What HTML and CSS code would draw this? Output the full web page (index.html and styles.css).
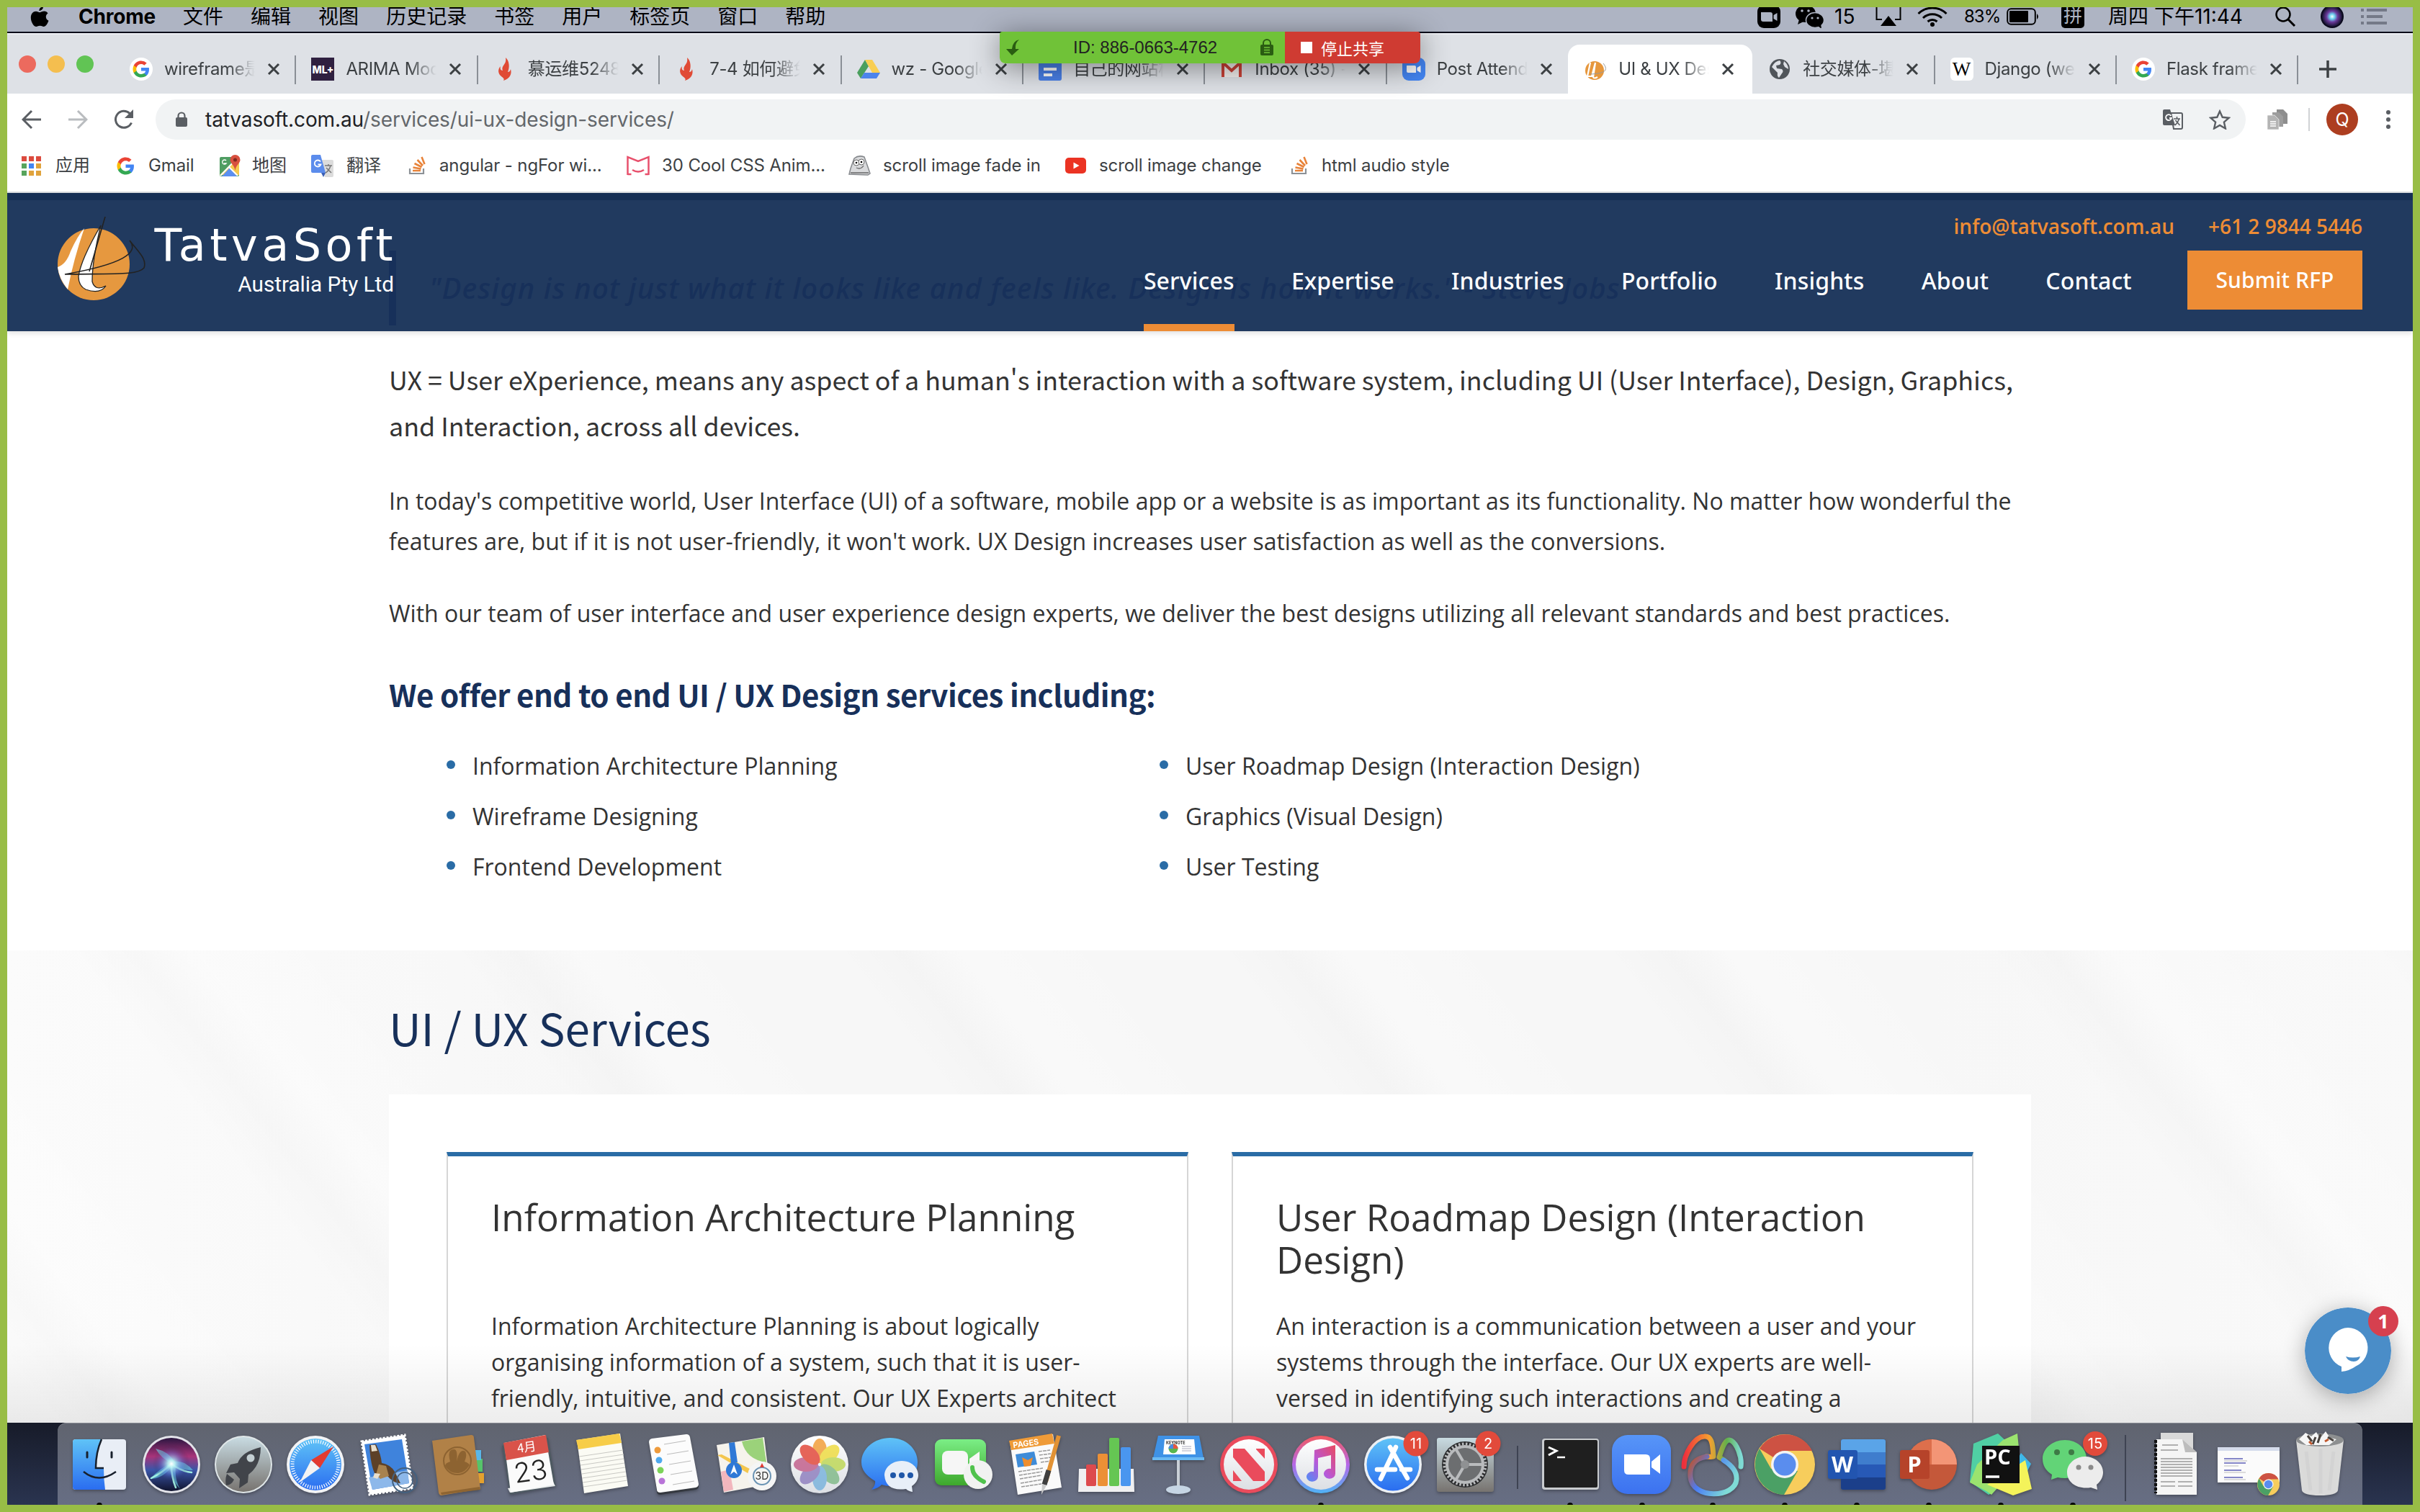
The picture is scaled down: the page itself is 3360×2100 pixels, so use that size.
FILE: index.html
```html
<!DOCTYPE html>
<html lang="zh-CN">
<head>
<meta charset="utf-8">
<title>UI &amp; UX Design Services</title>
<link rel="stylesheet" href="styles.css">
</head>
<body>
<svg class="defs" width="0" height="0">
  <defs>
    <linearGradient id="blue" x2="0" y2="1"><stop stop-color="#5fc3f7"/><stop offset="1" stop-color="#2a6df0"/></linearGradient>
    <linearGradient id="zoomg" x2="0" y2="1"><stop stop-color="#5795f8"/><stop offset="1" stop-color="#3c72f0"/></linearGradient>
    <linearGradient id="green" x2="0" y2="1"><stop stop-color="#7bee86"/><stop offset="1" stop-color="#3ea82c"/></linearGradient>
    <linearGradient id="grey" x2="0" y2="1"><stop stop-color="#c8dbe2"/><stop offset="1" stop-color="#77736f"/></linearGradient>
    <linearGradient id="white" x2="0" y2="1"><stop stop-color="#ffffff"/><stop offset="1" stop-color="#dcdfe4"/></linearGradient>
    <linearGradient id="music" x2="0" y2="1"><stop stop-color="#f25a5f"/><stop offset=".5" stop-color="#b667e8"/><stop offset="1" stop-color="#4fb4f6"/></linearGradient>
    <linearGradient id="note" x1="1" x2="0" y2="1"><stop stop-color="#ea4a5f"/><stop offset=".55" stop-color="#b857d8"/><stop offset="1" stop-color="#4d8ff7"/></linearGradient>
    <linearGradient id="nav" x2="1" y2="0"><stop stop-color="#ee2f3c"/><stop offset=".45" stop-color="#f5a030"/><stop offset=".75" stop-color="#62b04c"/><stop offset="1" stop-color="#7fdbd6"/></linearGradient>
    <linearGradient id="navb" x2="1" y2=".5"><stop stop-color="#c7501e"/><stop offset=".45" stop-color="#4b7df5"/><stop offset="1" stop-color="#7fdbd6"/></linearGradient>
    <radialGradient id="siri"><stop stop-color="#f4ffff"/><stop offset=".25" stop-color="#6fd3ef"/><stop offset=".55" stop-color="#6b3a9c"/><stop offset="1" stop-color="#15132f"/></radialGradient>
    <radialGradient id="orb" cx=".5" cy=".5" r=".5"><stop stop-color="#ffffff"/><stop offset=".2" stop-color="#b9f3f4" stop-opacity=".9"/><stop offset=".6" stop-color="#5a78d8" stop-opacity=".35"/><stop offset="1" stop-color="#1a1434" stop-opacity="0"/></radialGradient>
    <linearGradient id="orbbg" x2="0" y2="1"><stop stop-color="#2a1640"/><stop offset=".35" stop-color="#a8347a"/><stop offset=".6" stop-color="#3a55a8"/><stop offset="1" stop-color="#10142e"/></linearGradient>
    <symbol id="g" viewBox="0 0 48 48"><path fill="#4285f4" d="M46 24.5c0-1.600-.2-3-.4-4.500H24v9h12.400c-.6 3-2.300 5.400-4.700 7v6h7.600c4.300-4 6.700-10 6.700-17.500z"/><path fill="#34a853" d="M24 47c6.200 0 11.400-2 15.200-5.600l-7.500-5.800c-2 1.400-4.600 2.300-7.700 2.300-6 0-11-4-12.800-9.500H3.500v6C7.300 42 15 47 24 47z"/><path fill="#fbbc05" d="M11.200 28.400a14 14 0 0 1 0-8.800v-6H3.500a23 23 0 0 0 0 20.800z"/><path fill="#ea4335" d="M24 10.100c3.400 0 6.400 1.200 8.800 3.500l6.600-6.600A22.500 22.500 0 0 0 24 1C15 1 7.300 6.200 3.500 13.600l7.700 6C13 14.100 18 10.100 24 10.100z"/></symbol>
    <symbol id="x" viewBox="0 0 18 18"><path d="M2 2l14 14M16 2L2 16" stroke="#3c4043" stroke-width="3" fill="none"/></symbol>
    <symbol id="flame" viewBox="0 0 32 32"><path fill="#e04a35" d="M17 0c1 6-1 8-3 11s-2 5-1 7c-3 0-4-3-3-6-4 4-4 10 1 14 2 2 5 3 3 6 9-3 12-9 10-16-1 3-2 4-4 4 3-7 2-16-3-20z"/></symbol>
    <symbol id="so" viewBox="0 0 24 26"><path d="M2 17v7h19v-7" fill="none" stroke="#8c9196" stroke-width="2.200"/><path d="M6 20h11M6.500 15.500l11 2M8.500 10l10 5M12.500 5l7.500 8M18.500 1l4 10" stroke="#e8833a" stroke-width="2.600" fill="none"/></symbol>
    <symbol id="chrome" viewBox="0 0 84 84"><circle cx="42" cy="42" r="42" fill="#f7cd5c"/><path fill="#cd5243" d="M42 42L7 20a42 42 0 0 1 73 3H42z"/><path fill="#4ba065" d="M7 20a42 42 0 0 0 34 64l19-33-37-3z"/><circle cx="42" cy="42" r="19" fill="#f4f4f4"/><circle cx="42" cy="42" r="15.500" fill="#5a8dee"/></symbol>
  </defs>
</svg>

<div class="desktop">
  <div class="menubar">
    <div class="menus">
      <svg class="apple" viewBox="0 0 26 28"><path d="M18 0c.3 3-2.500 6-5.500 6C12 3 15 .4 18 0zM24.500 9.500c-4 2.500-3.500 8.500 1 10.300C24 24 21.500 28 18.700 28c-2 0-2.700-1.200-5.200-1.200S10.200 28 8.300 28C4.800 28 .8 21.500.8 15.500c0-5.500 3.500-8.700 7-8.700 2.300 0 4 1.400 5.500 1.400 1.400 0 3.500-1.600 6.200-1.600 2 0 4 1 5 2.900z"/></svg>
      <b>Chrome</b><span>文件</span><span>编辑</span><span>视图</span><span>历史记录</span><span>书签</span><span>用户</span><span>标签页</span><span>窗口</span><span>帮助</span>
    </div>
    <div class="status">
      <svg class="s-zoom" viewBox="0 0 32 32"><rect width="32" height="32" rx="9"/><path fill="#aeb4c3" d="M5 10h13q3 0 3 3v10H8q-3 0-3-3zM22.500 14l5-3v11l-5-3z"/></svg>
      <svg class="s-wechat" viewBox="0 0 40 32"><ellipse cx="15" cy="12" rx="14" ry="12"/><path d="M6 20l-2 7 8-4z"/><ellipse cx="28" cy="21" rx="12.500" ry="10.500" stroke="#aeb4c3" stroke-width="1.500"/><path d="M32 29l5 4-1-7z"/><g fill="#aeb4c3"><circle cx="10" cy="8" r="1.800"/><circle cx="19" cy="8" r="1.800"/><circle cx="24" cy="18" r="1.600"/><circle cx="32" cy="18" r="1.600"/></g></svg>
      <span class="s-15">15</span>
      <svg class="s-air" viewBox="0 0 36 28"><path d="M9 18H1.500V0M27 18h7.500V0" fill="none" stroke="#000" stroke-width="2"/><path d="M18 13l11 14H7z"/></svg>
      <svg class="s-wifi" viewBox="0 0 42 28"><g fill="none" stroke="#000" stroke-width="3"><path d="M1.500 10a28 28 0 0 1 39 0M8 16a19 19 0 0 1 26 0M14.500 21a10 10 0 0 1 13 0"/></g><circle cx="21" cy="25" r="3"/></svg>
      <span class="s-pct">83%</span>
      <svg class="s-bat" viewBox="0 0 46 24"><rect x="1.200" y="1.200" width="38.600" height="21.600" rx="5" fill="none" stroke="#000" stroke-width="2"/><rect x="4" y="4" width="26" height="16" rx="1"/><path d="M42 8q4 4 0 8z"/></svg>
      <span class="s-pin">拼</span>
      <span class="s-date">周四 下午11:44</span>
      <svg class="s-search" viewBox="0 0 30 28"><circle cx="12" cy="11" r="9.500" fill="none" stroke="#000" stroke-width="2.500"/><path d="M19 18l9 9" stroke="#000" stroke-width="3"/></svg>
      <svg class="s-siri" viewBox="0 0 32 32"><circle cx="16" cy="16" r="16" fill="#0b0a1e"/><circle cx="16" cy="16" r="14" fill="url(#siri)"/></svg>
      <svg class="s-list" viewBox="0 0 36 22"><path d="M0 2h4M8 2h28M0 11h4M8 11h22M0 20h4M8 20h28" stroke="#747987" stroke-width="4"/></svg>
    </div>
  </div>

  <div class="tabstrip">
    <div class="lights"><i class="red"></i><i class="yellow"></i><i class="greenl"></i></div>
    <div class="tab"><i class="fav round"><svg viewBox="0 0 48 48"><use href="#g"/></svg></i><span>wireframe是什么</span><svg class="x"><use href="#x"/></svg></div>
    <div class="tab"><i class="fav ml">ML+</i><span>ARIMA Model</span><svg class="x"><use href="#x"/></svg></div>
    <div class="tab"><i class="fav"><svg><use href="#flame"/></svg></i><span>慕运维5248开</span><svg class="x"><use href="#x"/></svg></div>
    <div class="tab"><i class="fav"><svg><use href="#flame"/></svg></i><span>7-4 如何避免</span><svg class="x"><use href="#x"/></svg></div>
    <div class="tab"><i class="fav"><svg viewBox="0 0 32 32"><path fill="#4a9f5e" d="M11 3L0 21l5 8 11-17z"/><path fill="#f8ce53" d="M11 3h10l11 18H21z"/><path fill="#4c84ec" d="M10 21h22l-5 8H5z"/></svg></i><span>wz - Google</span><svg class="x"><use href="#x"/></svg></div>
    <div class="tab"><i class="fav docs"></i><span>自己的网站模</span><svg class="x"><use href="#x"/></svg></div>
    <div class="tab"><i class="fav"><svg viewBox="0 0 32 32"><path fill="#f4f0ee" d="M2 5h28v22H2z"/><path d="M4 27V7l12 11L28 7v20" fill="none" stroke="#cc4237" stroke-width="4"/></svg></i><span>Inbox (35) -</span><svg class="x"><use href="#x"/></svg></div>
    <div class="tab nosep"><i class="fav"><svg viewBox="0 0 32 32"><rect width="32" height="32" rx="9" fill="#4486f4"/><path fill="#fff" d="M6 11h11q2 0 2 2v8H8q-2 0-2-2zM20.500 14l5-3v10l-5-3z"/></svg></i><span>Post Attendee</span><svg class="x"><use href="#x"/></svg></div>
    <div class="tab active"><i class="fav"><svg viewBox="0 0 32 32"><circle cx="15" cy="18" r="13" fill="#e6973c"/><path d="M9 7L5 26l6 0 5-19-3 20q1 3 6 0" fill="none" stroke="#fff" stroke-width="2.200"/><path d="M27 8c8 10 2 14-18 15" fill="none" stroke="#999"/></svg></i><span>UI &amp; UX Design</span><svg class="x"><use href="#x"/></svg></div>
    <div class="tab"><i class="fav"><svg viewBox="0 0 32 32"><circle cx="16" cy="16" r="14" fill="#50555a"/><path fill="#dee1e6" d="M5 13q4-8 11-9 3 3 0 6l-5 1 1 4 7 1q3 3 0 6l-4 6q-3-2-2-7l-4-4zM22 5q6 5 6 11l-5-3-2-4z"/></svg></i><span>社交媒体-堪培</span><svg class="x"><use href="#x"/></svg></div>
    <div class="tab"><i class="fav wiki">W</i><span>Django (web</span><svg class="x"><use href="#x"/></svg></div>
    <div class="tab"><i class="fav round"><svg viewBox="0 0 48 48"><use href="#g"/></svg></i><span>Flask framework</span><svg class="x"><use href="#x"/></svg></div>
    <svg class="plus" viewBox="0 0 26 26"><path d="M13 1v24M1 13h24" stroke="#3c4043" stroke-width="3.500"/></svg>
  </div>

  <div class="toolbar">
    <svg class="back" viewBox="0 0 28 28"><path d="M27 14H3M14 2L2 14l12 12" fill="none" stroke="#5a5e63" stroke-width="3"/></svg>
    <svg class="fwd" viewBox="0 0 28 28"><path d="M1 14h24M14 2l12 12-12 12" fill="none" stroke="#b9bcbf" stroke-width="3"/></svg>
    <svg class="reload" viewBox="0 0 28 28"><path d="M24.500 18.500A11.500 11.500 0 1 1 22 5.500l2 2.500" fill="none" stroke="#5a5e63" stroke-width="3"/><path fill="#5a5e63" d="M27 0v12H15z"/></svg>
    <div class="omnibox">
      <svg class="lock" viewBox="0 0 16 22"><rect y="8" width="16" height="13" rx="2" fill="#5a5e63"/><path d="M3.500 9V6a4.500 4.500 0 0 1 9 0v3" fill="none" stroke="#5a5e63" stroke-width="2.200"/></svg>
      <span class="url">tatvasoft.com.au<em>/services/ui-ux-design-services/</em></span>
      <svg class="trans" viewBox="0 0 28 28"><path d="M11 5h14q2 0 2 2v18q0 2-2 2H15z" fill="none" stroke="#5a5e63" stroke-width="2"/><path fill="#5a5e63" d="M2 0h8l7 22H2q-2 0-2-2V2q0-2 2-2z"/><path d="M11.500 9a4 4 0 1 0 .5 3H9" fill="none" stroke="#fff" stroke-width="1.800"/><path d="M15 13h9M19.500 10v3M22.500 13q-2 6-6 9M17.500 15l6 7" fill="none" stroke="#5a5e63" stroke-width="1.600"/></svg>
      <svg class="star" viewBox="0 0 30 28"><path d="M15 2.500l3.700 8.300 9 .9-6.800 6 2 8.800-7.900-4.600-7.900 4.600 2-8.800-6.800-6 9-.9z" fill="none" stroke="#5a5e63" stroke-width="2.400"/></svg>
    </div>
    <svg class="ext" viewBox="0 0 28 28"><path fill="#8e8e8e" d="M13 0h9l6 6v14H13z"/><path fill="#9d9d9d" d="M7 4h9l6 6v14H7z"/><path fill="#b4b4b4" stroke="#fff" stroke-width=".6" d="M0 8h10l6 6v14H0z"/><path d="M4 17h8M4 20h8M4 23h8" stroke="#fff" stroke-width="1.500"/></svg>
    <i class="tsep"></i>
    <span class="avatar">Q</span>
    <svg class="dots" viewBox="0 0 6 26"><circle cx="3" cy="3" r="3"/><circle cx="3" cy="13" r="3"/><circle cx="3" cy="23" r="3"/></svg>
  </div>

  <div class="bookmarks">
    <div><svg class="bi apps" viewBox="0 0 27 27"><path fill="#dc4b3e" d="M0 0h7v7H0zM10 0h7v7h-7zM20 0h7v7h-7z"/><path fill="#57a45c" d="M0 10h7v7H0zM0 20h7v7H0z"/><path fill="#4285f4" d="M10 10h7v7h-7z"/><path fill="#e0a33c" d="M20 10h7v7h-7zM10 20h7v7h-7zM20 20h7v7h-7z"/></svg><span>应用</span></div>
    <div><svg class="bi gg" viewBox="0 0 48 48"><use href="#g"/></svg><span>Gmail</span></div>
    <div><svg class="bi mp" viewBox="0 0 30 30"><rect y="3" width="27" height="27" rx="2" fill="#4f9d62"/><path fill="#f5c94f" d="M0 28L24 5l3 3v20z"/><path fill="#5b8ff0" d="M3 30l11-12 10 12z"/><path stroke="#fff" stroke-width="2" d="M1 29L25 4M13 17l12 12"/><path fill="#d8503f" d="M21.500 0a7 7 0 0 1 7 7c0 5-6 7-7 15-1-8-7-10-7-15a7 7 0 0 1 7-7z"/><circle cx="21.500" cy="7" r="2.500" fill="#7d2a20"/><path d="M9 8a3 3 0 1 0 0 4H6" stroke="#fff" fill="none" stroke-width="1.300"/></svg><span>地图</span></div>
    <div><svg class="bi tr" viewBox="0 0 31 31"><path fill="#dcdcdc" d="M12 7h17q2 0 2 2v20q0 2-2 2H19z"/><path fill="#5b8cec" d="M2 0h11l7 25H2q-2 0-2-2V2q0-2 2-2z"/><path fill="#3a5fb5" d="M14 25h6l-3 6z"/><path d="M13 9.500a4.500 4.500 0 1 0 .5 4H9.500" stroke="#fff" fill="none" stroke-width="1.800"/><path d="M19 15h10M24 13v2M27 15q-2 7-7 10M21 18l7 7" stroke="#777" fill="none" stroke-width="1.500"/></svg><span>翻译</span></div>
    <div><svg class="bi sov"><use href="#so"/></svg><span>angular - ngFor wi...</span></div>
    <div><svg class="bi mm" viewBox="0 0 32 28"><path d="M1.500 27V2l14.500 6L30.500 2v25M1.500 26h5M25.500 26h5M8 20q8 5 16 0" fill="none" stroke="#e8506c" stroke-width="2.500"/></svg><span>30 Cool CSS Anim...</span></div>
    <div><svg class="bi cd" viewBox="0 0 33 28"><path d="M2 26l2-8 5-14q6-5 14-2l5 14 3 9-3 2z" fill="#d9dadc" stroke="#85888c" stroke-width="1.500"/><circle cx="12" cy="10" r="4" fill="#fff" stroke="#666"/><circle cx="19" cy="9" r="4" fill="#fff" stroke="#666"/><circle cx="12" cy="10" r="1.300"/><circle cx="19" cy="9" r="1.300"/><path d="M12 17q6 3 10-3M4 24h25" fill="none" stroke="#666" stroke-width="1.300"/></svg><span>scroll image fade in</span></div>
    <div><svg class="bi yt" viewBox="0 0 29 22"><rect width="29" height="22" rx="5" fill="#eb3323"/><path fill="#fff" d="M11.500 6.500l8 4.500-8 4.500z"/></svg><span>scroll image change</span></div>
    <div><svg class="bi sov"><use href="#so"/></svg><span>html audio style</span></div>
  </div>

  <div class="page">
    <header class="site">
      <p class="quote">"Design is not just what it looks like and feels like. Design is how it works." - Steve Jobs</p>
      <div class="brand">
        <svg viewBox="0 0 124 118"><circle cx="50" cy="66" r="50" fill="#e6983f"/><path fill="#fff" d="M37 16Q22 60 14 101 2 86 0 70 12 66 18 48 28 26 37 16z"/><path fill="#fff" d="M60 12Q48 60 48 90q4 14 19 6-8 12-28 5-10-5-10-18Q32 60 60 12z" stroke="#222" stroke-width="1.300"/><path fill="none" stroke="#222" stroke-width="1.600" d="M66 0L44 76M100 33c14 18 24 26 20 38-8 10-36 8-110 9 80-14 104-30 90-47z"/></svg>
        <div class="brandtext"><span class="tatva">TatvaSoft</span><span class="apl">Australia Pty Ltd</span></div>
      </div>
      <div class="right">
        <div class="contact"><span>info@tatvasoft.com.au</span><span>+61 2 9844 5446</span></div>
        <nav><a class="on">Services</a><a>Expertise</a><a>Industries</a><a>Portfolio</a><a>Insights</a><a>About</a><a>Contact</a><a class="rfp">Submit RFP</a></nav>
      </div>
    </header>

    <main>
      <p class="lead">UX = User eXperience, means any aspect of a human's interaction with a software system, including UI (User Interface), Design, Graphics,<br>and Interaction, across all devices.</p>
      <p>In today's competitive world, User Interface (UI) of a software, mobile app or a website is as important as its functionality. No matter how wonderful the<br>features are, but if it is not user-friendly, it won't work. UX Design increases user satisfaction as well as the conversions.</p>
      <p>With our team of user interface and user experience design experts, we deliver the best designs utilizing all relevant standards and best practices.</p>
      <h3>We offer end to end UI / UX Design services including:</h3>
      <ul><li>Information Architecture Planning</li><li>User Roadmap Design (Interaction Design)</li><li>Wireframe Designing</li><li>Graphics (Visual Design)</li><li>Frontend Development</li><li>User Testing</li></ul>
    </main>

    <section class="services">
      <h2>UI / UX Services</h2>
      <div class="panel">
        <article><h4>Information Architecture Planning</h4><p>Information Architecture Planning is about logically<br>organising information of a system, such that it is user-<br>friendly, intuitive, and consistent. Our UX Experts architect</p></article>
        <article><h4>User Roadmap Design (Interaction<br>Design)</h4><p>An interaction is a communication between a user and your<br>systems through the interface. Our UX experts are well-<br>versed in identifying such interactions and creating a</p></article>
      </div>
    </section>
    <div class="fade"></div>
    <div class="chat">
      <svg viewBox="0 0 120 120"><circle cx="60" cy="60" r="60" fill="#4a8dc8"/><path fill="#fff" d="M60 28a28 28 0 0 1 11 53.500Q62 88 51 89V82A28 28 0 0 1 60 28z"/><path fill="#4a8dc8" d="M57 68q10 3 20 0-2 7-9 7-8 0-11-7z"/></svg>
      <b>1</b>
    </div>
  </div>

  <div class="dockbar"><div class="dock">
    <svg viewBox="0 0 100 114"><rect x="13" y="23" width="74" height="70" rx="4" fill="#e9eef6"/><path fill="url(#blue)" d="M17 23h36q-8 18-8 40h11q0 16 2 30H17q-4 0-4-4V27q0-4 4-4z"/><path d="M33 41v7M67 41v7" stroke="#18202c" stroke-width="3" stroke-linecap="round"/><path d="M28 68q21 17 45 0M53 23q-8 18-8 40h11" fill="none" stroke="#18202c" stroke-width="2.500"/></svg>
    <svg viewBox="0 0 100 114"><circle cx="50" cy="58" r="40" fill="#e3e4ea"/><circle cx="50" cy="58" r="37" fill="url(#orbbg)"/><path fill="#6fe0f0" opacity=".55" d="M20 78Q36 62 50 56q-14-6-22-20 18 4 26 18 14-2 26 12-14 0-24-4-2 16 6 30-12-12-14-28-12 14-28 14z"/><path d="M22 77q16-8 28-20 12 10 28 12M50 58q0 18 6 32" fill="none" stroke="#a8fbe8" stroke-width="2.500" stroke-linecap="round" opacity=".9"/><circle cx="50" cy="57" r="26" fill="url(#orb)"/></svg>
    <svg viewBox="0 0 100 114"><circle cx="50" cy="58" r="40" fill="#dfe6e8"/><circle cx="50" cy="58" r="38" fill="url(#grey)"/><path fill="#41444a" d="M74 34Q48 40 42 56l-10 2-6 12 11-1 8 9-1 13 12-8 1-11Q74 60 74 34zM27 71l10 8q-4 8-11 8-2-8 1-16z"/><circle cx="60" cy="49" r="5.500" fill="#c4cfd2"/></svg>
    <svg viewBox="0 0 100 114"><circle cx="50" cy="58" r="40" fill="#f2f3f5"/><circle cx="50" cy="58" r="36" fill="url(#blue)"/><circle cx="50" cy="58" r="32" fill="none" stroke="#fff" stroke-width="5" stroke-dasharray="1.200 2.150"/><path fill="#e33a30" d="M75 33L44 52l12 11z"/><path fill="#f3f3f3" d="M28 83l16-31 12 11z"/></svg>
    <svg viewBox="0 0 100 114"><path fill="#fff" stroke="#fff" stroke-width="3" stroke-dasharray="3 2" d="M14 26l60-9 11 74-60 9z"/><path fill="#3f83dc" d="M18 30l52-7 10 61-51 9z"/><path fill="#8db8ea" d="M24 76l54-10 2 18-51 9z"/><path fill="#5d4128" d="M25 31l9-1q7 14 8 26 12 2 18 12l8 16q-10 0-18-10l-10 2-8-6q-6-14-7-39z"/><path fill="#a8824e" d="M38 58l10 2 4 14-12 4-6-6z"/><path fill="#e8dfce" d="M27 31l6 0 3 8-8 1zM32 70l8 1-4 7-6-2z"/><circle cx="74" cy="80" r="17" fill="none" stroke="#44617f" stroke-width="2"/><circle cx="74" cy="80" r="11" fill="none" stroke="#44617f" stroke-width="1.500"/></svg>
    <svg viewBox="0 0 100 114"><path fill="#e4a12e" d="M70 70h14v14H70z"/><path fill="#56c46a" d="M70 50h12v18H70z"/><path fill="#59b7e8" d="M68 38h12v14H68z"/><path fill="#b18147" d="M12 25l54-8q4 0 4 4l9 71-54 9q-3 0-4-4z"/><path fill="#8e6431" d="M24 97l54-8 1 4-54 7z"/><circle cx="47" cy="53" r="19" fill="none" stroke="#8d6331" stroke-width="2"/><path fill="#8d6331" d="M30 60q0-4 7-6-5-18 6-17 5 1 3 17 4-19 12-14 3 5-1 14 6 2 7 5-8 12-17 11-11 0-17-10z"/></svg>
    <svg viewBox="0 0 100 114"><path fill="#4e5a62" d="M9 32l64-11 11 67-64 12z"/><path fill="#e8ebec" d="M17 91l63-9 3 6-63 9z"/><path fill="#fbfbfb" d="M12 28l57-11 12 69-60 11z"/><path fill="#d9534a" d="M11 28l59-11 4 24-59 11z"/><text x="44" y="40" class="t1" transform="rotate(-8 44 40)">4月</text><text x="49" y="81" class="t2" transform="rotate(-8 49 70)">23</text></svg>
    <svg viewBox="0 0 100 114"><path fill="#fbfbf4" d="M13 24l60-9 11 73-61 10z"/><path fill="#f7cd48" d="M12 24l60-9 3 13-60 9z"/><path d="M16 47l61-9M17 53l61-9M18 59l60-9M19 65l60-9M20 71l60-9M20 77l61-9M21 83l61-9M22 89l61-9" stroke="#c9c9c4"/></svg>
    <svg viewBox="0 0 100 114"><path fill="#34383f" d="M14 28q0-4 4-5l47-6q4 0 5 4l12 67q0 4-4 5l-49 7q-5 0-5-4z"/><path fill="#fcfcfc" d="M13 27q0-4 4-5l48-6q4 0 5 4l12 65q0 4-4 5l-49 7q-5 0-5-4z"/><circle cx="25" cy="38" r="4.500" fill="#ee9b3c"/><circle cx="27" cy="52" r="4.500" fill="#4ea9ee"/><circle cx="29" cy="66" r="4.500" fill="#7bd357"/><circle cx="31" cy="81" r="4.500" fill="#b873d8"/><path d="M34 30l30-5M38 44l30-5M41 58l30-5M43 72l30-5M46 86l30-5" stroke="#bbb"/></svg>
    <svg viewBox="0 0 100 114"><path fill="#f6f3ec" d="M7 31l66-11 8 65-64 12z"/><path fill="#9bd27a" d="M42 26l29-5 5 34q-28-4-34-29z"/><path fill="#f4c64d" d="M8 45l6-1 62 32 1 10z"/><path fill="#f2b6bd" d="M13 68l12-3 5 28-13 3z"/><path fill="#2f78d6" d="M24 28l8-1 4 28-9 2z"/><circle cx="31" cy="66" r="11" fill="#2f78d6"/><path fill="#fff" d="M31 58l5 14-5-4-5 4z"/><circle cx="70" cy="74" r="20" fill="#f5f5f5"/><circle cx="70" cy="74" r="12" fill="none" stroke="#6a93b4" stroke-width="2"/><path fill="#e03a30" d="M70 56l3 6h-6z"/><text x="70" y="79" class="t3">3D</text></svg>
    <svg viewBox="0 0 100 114"><circle cx="50" cy="58" r="40" fill="url(#white)"/><g opacity=".85"><ellipse cx="50" cy="39" rx="10" ry="17" fill="#f2a03c"/><ellipse cx="50" cy="39" rx="10" ry="17" fill="#efdc44" transform="rotate(45 50 58)"/><ellipse cx="50" cy="39" rx="10" ry="17" fill="#bfd859" transform="rotate(90 50 58)"/><ellipse cx="50" cy="39" rx="10" ry="17" fill="#83bb8b" transform="rotate(135 50 58)"/><ellipse cx="50" cy="39" rx="10" ry="17" fill="#7cb4dd" transform="rotate(180 50 58)"/><ellipse cx="50" cy="39" rx="10" ry="17" fill="#9182c0" transform="rotate(225 50 58)"/><ellipse cx="50" cy="39" rx="10" ry="17" fill="#c3628e" transform="rotate(270 50 58)"/><ellipse cx="50" cy="39" rx="10" ry="17" fill="#e34c3e" transform="rotate(315 50 58)"/></g></svg>
    <svg viewBox="0 0 100 114"><path fill="url(#blue)" d="M48 21c22 0 38 15 38 34S70 88 48 88q-6 0-12-2-4 5-14 7 6-6 5-12Q8 70 8 55c0-19 18-34 40-34z"/><path fill="#e8eff8" d="M64 53c13 0 23 9 23 20 0 6-4 12-9 15l1 8q-6-1-9-4-28 4-30-19c0-11 11-20 24-20z"/><g fill="#1f57a8"><circle cx="52" cy="73" r="4"/><circle cx="64" cy="73" r="4"/><circle cx="76" cy="73" r="4"/></g></svg>
    <svg viewBox="0 0 100 114"><rect x="10" y="23" width="71" height="64" rx="9" fill="url(#green)"/><rect x="20" y="39" width="36" height="33" rx="8" fill="#f6f6f6"/><path fill="#f6f6f6" d="M58 50l14-10v18l-14 8z"/><circle cx="70" cy="72" r="20" fill="#f1f2f1"/><path d="M62 62q0 12 16 20" stroke="#4fc24c" stroke-width="6" fill="none" stroke-linecap="round"/></svg>
    <svg viewBox="0 0 100 114"><path fill="#fafafa" d="M14 26l60-10 12 74-61 10z"/><path fill="#ef9b38" d="M13 25l60-10 3 14-60 9z"/><text x="19" y="35" class="t4" transform="rotate(-8 19 35)">PAGES</text><path fill="#3f8cd8" d="M22 44l26-4 4 18-27 4z"/><path fill="#ef8e2e" d="M31 48l8 4 7-4-3 12-9 1z"/><path d="M54 40l16-2M55 45l16-2M56 50l16-2M57 55l14-2M26 68l34-5M27 73l32-5M28 78l30-5M29 84l30-5M30 89l28-4" stroke="#999" stroke-width="1.500" stroke-dasharray="5 1"/><path d="M82 18L64 82" stroke="#e29234" stroke-width="6"/><path d="M68 66l-6 20" stroke="#3f3f3f" stroke-width="7"/><path fill="#ccc" d="M59 85l6 2-7 13z"/></svg>
    <svg viewBox="0 0 100 114"><path fill="#f0f0f2" d="M10 64h76l1 32H9z"/><rect x="20" y="58" width="14" height="30" rx="2" fill="#dd4a4e"/><rect x="36" y="43" width="14" height="45" rx="2" fill="#ec9036"/><rect x="52" y="21" width="14" height="67" rx="2" fill="#65c653"/><rect x="68" y="34" width="14" height="54" rx="2" fill="#4a96ef"/></svg>
    <svg viewBox="0 0 100 114"><path d="M48 50v45" stroke="#c9cfd6" stroke-width="4"/><ellipse cx="48" cy="93" rx="17" ry="6" fill="#c6d5e4"/><path fill="#3f92e6" d="M20 18h57l6 31H13z"/><path fill="#6bbaf2" d="M12 48h72v4H12z"/><path fill="#fff" d="M29 23h41l2 21H27z"/><text x="31" y="30" class="t5">KEYNOTE</text><circle cx="41" cy="36" r="6.500" fill="#59b64e"/><path fill="#e6573f" d="M41 36v-6.500a6.500 6.500 0 0 1 6.500 6.500z"/><path fill="#4a8ae0" d="M41 36h-6.500a6.500 6.500 0 0 1 6.500-6.500z"/><path d="M53 33h13M53 36h13M53 39h13" stroke="#aab"/></svg>
    <svg viewBox="0 0 100 114"><circle cx="46" cy="58" r="40" fill="#ea4b5c"/><circle cx="46" cy="58" r="35" fill="url(#white)"/><path fill="#ea4b5c" d="M24 36h16l28 32v13H52L24 48zM56 36h12v14L56 37zM24 66l12 15H24z"/></svg>
    <svg viewBox="0 0 100 114"><circle cx="46" cy="58" r="40" fill="url(#music)"/><circle cx="46" cy="58" r="35" fill="url(#white)"/><path fill="url(#note)" d="M37 38l29-7v40a8 7 0 1 1-6-7V45l-18 4v26a8 7 0 1 1-6-7z"/></svg>
    <svg viewBox="0 0 100 114"><circle cx="46" cy="58" r="40" fill="#ecf0f4"/><circle cx="46" cy="58" r="36.500" fill="url(#blue)"/><path d="M50 34L29 78M42 34l24 43M24 65h25M58 65h12" stroke="#fff" stroke-width="6.500" stroke-linecap="round"/><circle cx="78" cy="29" r="17.500" fill="#e24a3b"/><text x="78" y="36" class="badge">11</text></svg>
    <svg viewBox="0 0 100 114"><rect x="7" y="21" width="79" height="75" rx="3" fill="url(#grey)"/><circle cx="46" cy="58" r="32" fill="#2c2d2f"/><circle cx="46" cy="58" r="25" fill="#6c6e70"/><circle cx="46" cy="58" r="25" fill="none" stroke="#b9bbbd" stroke-width="4"/><circle cx="46" cy="58" r="28.500" fill="none" stroke="#b9bbbd" stroke-width="4" stroke-dasharray="2.500 2.500"/><path d="M46 58h25M46 58L33 36M46 58L33 80" stroke="#b9bbbd" stroke-width="4"/><circle cx="46" cy="58" r="6" fill="#8f9193"/><circle cx="78" cy="29" r="17.500" fill="#e24a3b"/><text x="78" y="36" class="badge">2</text></svg>
    <i class="dsep"></i>
    <svg viewBox="0 0 100 114"><rect x="11" y="22" width="79" height="71" rx="4" fill="#c9cccf"/><rect x="14" y="24" width="74" height="66" rx="2" fill="#1f1f1f"/><path d="M20 34l11 5-11 6" fill="none" stroke="#fff" stroke-width="3"/><path d="M32 48h11" stroke="#fff" stroke-width="2.500"/></svg>
    <svg viewBox="0 0 100 114"><rect x="8" y="17" width="82" height="82" rx="22" fill="url(#zoomg)"/><path fill="#fff" d="M25 44h30q6 0 6 6v22H31q-6 0-6-6zM63 54l12-10v27l-12-9z"/></svg>
    <svg viewBox="0 0 100 114"><g fill="none" stroke-width="7" stroke-linecap="round" stroke-linejoin="round"><path stroke="url(#nav)" d="M8 61C8 44 22 20 36 19c10-1 12 8 13 28q-1 1-10 0M87 61c2-14-6-32-13-36-8-5-13 10-17 23l7 4"/><path stroke="url(#navb)" d="M40 47C20 50 16 62 17 75c2 32 62 30 64 4 1-12-7-20-18-27"/></g></svg>
    <svg viewBox="0 0 100 114"><use href="#chrome" x="6" y="16" width="84" height="84"/></svg>
    <svg viewBox="0 0 100 114"><rect x="26" y="23" width="62" height="70" rx="3" fill="#1b3f8a"/><path fill="#2759b6" d="M26 58h62v18H26z"/><path fill="#3f7dcd" d="M26 41h62v17H26z"/><path fill="#5aa4e8" d="M29 23h56q3 0 3 3v15H26V26q0-3 3-3z"/><rect x="8" y="38" width="41" height="40" rx="3" fill="#2255b0"/><text x="28" y="69" class="office">W</text></svg>
    <svg viewBox="0 0 100 114"><circle cx="52" cy="58" r="35" fill="#c4583a"/><path fill="#f39576" d="M52 58V23a35 35 0 0 1 35 35z"/><path fill="#dd6f4c" d="M52 58V23a35 35 0 0 0-35 35z"/><rect x="8" y="38" width="41" height="40" rx="3" fill="#b6432a"/><text x="28" y="69" class="office">P</text></svg>
    <svg viewBox="0 0 100 114"><path fill="#50cfa4" d="M10 29l34-14 13 12-20 70-6 3L5 82z"/><path fill="#9be36f" d="M71 15l4 40-40 45-7-5L5 83l10-25 36-34z"/><path fill="#3fb8e8" d="M76 42l14 15-10 20-12-20z"/><path fill="#f4f35a" d="M82 52l9 40-26 9-36-15z"/><rect x="22" y="32" width="52" height="52" fill="#111"/><text x="25" y="58" class="pc">PC</text><path d="M27 75h19" stroke="#fff" stroke-width="3.500"/></svg>
    <svg viewBox="0 0 100 114"><path fill="#62d477" d="M37 24c17 0 30 12 30 26S54 77 37 77q-6 0-10-1l-9 3 1-7Q6 64 6 50c0-14 14-26 31-26z"/><path fill="#ececec" d="M65 47c14 0 25 10 25 22 0 7-4 13-9 17l1 7-9-3C54 93 40 83 40 69c0-12 11-22 25-22z"/><g fill="#3e7a46"><circle cx="26" cy="41" r="4"/><circle cx="46" cy="41" r="4"/></g><g fill="#8a8a8a"><circle cx="56" cy="62" r="3.500"/><circle cx="73" cy="62" r="3.500"/></g><circle cx="79" cy="29" r="17" fill="#e24a3b"/><text x="79" y="36" class="badge">15</text></svg>
    <i class="dsep tall"></i>
    <svg viewBox="0 0 100 114"><path fill="#d9d9d9" d="M30 14h45v74H30z"/><path fill="#f5f5f5" d="M24 23h36l20 18v59H24z"/><path fill="#bdbdbd" d="M60 23l20 18H64z"/><path d="M23 24v74" stroke="#111" stroke-width="4" stroke-dasharray="4 2"/><path d="M32 31h22M30 38h24M30 50h44M30 54h44M30 58h44M30 62h44M30 66h44M30 70h44M30 74h44M30 82h20M54 82h20M30 88h20M54 88h20" stroke="#999" stroke-width="1.500"/></svg>
    <svg viewBox="0 0 100 114"><path fill="#fbfbfb" d="M9 34h86v49H9z"/><path fill="#d5dcec" d="M9 34h86v5H9z"/><path d="M18 50h26M18 56h30M18 66h24M18 76h26" stroke="#8587c8" stroke-width="2"/><path d="M18 53h32M18 60h20M18 69h30M18 79h30" stroke="#bbb"/><use href="#chrome" x="64" y="70" width="31" height="31"/></svg>
    <svg viewBox="0 0 100 114"><path fill="#e5e5e3" d="M18 24h66l-8 70q-2 7-25 7t-25-7z" opacity=".93"/><ellipse cx="51" cy="24" rx="33" ry="9" fill="#8d8f90"/><path fill="#f6f6f6" d="M22 23l9-9 8 5 7-6 5 9 8-10 6 9 9 2-10 8H32z"/><path d="M34 18l6 8M52 16l-4 12M62 20l8 5M45 20l-4 10" stroke="#48423e" stroke-width="3"/><path d="M36 26l4 4M58 26l5-3" stroke="#c2592f" stroke-width="3"/><path d="M32 40l6 54M52 36v62M70 40l-6 54" stroke="#cfcfcf" stroke-width="5" opacity=".6"/></svg>
    <div class="running"><i style="left:54px"></i><i style="left:1750px"></i><i style="left:2096px"></i><i style="left:2196px"></i><i style="left:2294px"></i><i style="left:2394px"></i><i style="left:2494px"></i><i style="left:2594px"></i><i style="left:2694px"></i><i style="left:2794px"></i></div>
  </div></div>

  <div class="share">
    <div class="sid"><svg viewBox="0 0 20 24"><path fill="#2a5d12" d="M18 1Q9 3 8 14H0l8 9 10-9h-5Q12 6 18 1z"/></svg><span>ID: 886-0663-4762</span><svg class="slock" viewBox="0 0 18 24"><rect y="8" width="18" height="15" rx="2" fill="#2a5d12"/><path d="M4 9V6a5 5 0 0 1 10 0v3" fill="none" stroke="#2a5d12" stroke-width="2"/><path d="M5 12h8M5 15.500h8M5 19h8" stroke="#70c238" stroke-width="1.500"/></svg></div>
    <div class="stop"><i></i><span>停止共享</span></div>
  </div>
</div>
</body>
</html>
```
FILE: styles.css
```css
* { box-sizing: border-box; }
body { margin: 0; background: #98bd46; overflow: hidden; }
.defs { position: absolute; }
i, em { font-style: normal; }
p, h2, h3, h4, ul { margin: 0; padding: 0; font-weight: 400; }

.desktop {
  position: relative;
  width: 3360px; height: 2100px;
  border: 10px solid #98bd46;
  display: flex; flex-direction: column;
  font-family: Inter, "Noto Sans CJK SC", sans-serif;
  font-size: 24px;
  color: #3c4043;
  overflow: hidden;
}
.desktop > * { flex-shrink: 0; }

/* menu bar */
.menubar {
  height: 36px;
  background: #aeb4c3;
  border-bottom: 2px solid #050a18;
  display: flex; justify-content: space-between;
  color: #000; font-size: 28px; line-height: 24px;
  padding: 0 36px 0 32px;
}
.menus, .status { display: flex; align-items: center; height: 25px; white-space: nowrap; }
.menus { gap: 38px; }
.menus .apple { width: 26px; height: 28px; margin-right: 3px; }
.menus b { font-weight: 700; letter-spacing: -.2px; }
.status svg, .status span { flex: none; display: block; }
.s-zoom { width: 32px; height: 32px; margin-right: 20px; }
.s-wechat { width: 40px; height: 32px; margin-right: 15px; }
.s-15 { width: 57px; }
.s-air { width: 36px; height: 28px; margin-right: 22px; }
.s-wifi { width: 42px; height: 28px; margin-right: 23px; }
.s-pct { width: 59px; font-size: 24px; letter-spacing: -1px; }
.s-bat { width: 46px; height: 24px; margin-right: 30px; }
.s-pin { width: 32px; height: 32px; border-radius: 5px; background: #000; color: #aeb4c3; font-size: 26px; line-height: 30px; text-align: center; margin-right: 33px; }
.s-date { width: 231px; }
.s-search { width: 30px; height: 28px; margin-right: 34px; }
.s-siri { width: 32px; height: 32px; margin-right: 24px; }
.s-list { width: 36px; height: 22px; }

/* tabs */
.tabstrip {
  height: 84px;
  background: #dee1e6;
  border-top: 2px solid #eceef2;
  display: flex;
}
.lights { width: 148px; padding: 29px 0 0 16px; display: flex; gap: 16px; }
.lights i { width: 24px; height: 24px; border-radius: 50%; }
.red { background: #ec6a5e; }
.yellow { background: #f4be4f; }
.greenl { background: #61c454; }
.tab { width: 252.4px; display: flex; align-items: center; padding: 14px 0 0 22px; position: relative; }
.tab::after { content: ""; position: absolute; right: -1px; top: 29px; width: 2px; height: 40px; background: #8a8f96; }
.tab.nosep::after, .tab.active::after { display: none; }
.fav { width: 32px; height: 32px; flex: none; display: flex; align-items: center; justify-content: center; margin-right: 16px; }
.fav svg { width: 32px; height: 32px; }
.round { background: #fff; border-radius: 50%; }
.fav.round svg { width: 24px; height: 24px; }
.ml { background: #2f2040; color: #fff; font-weight: 800; font-size: 14px; }
.docs { background: linear-gradient(#fff, #fff) 7px 14px / 18px 4px no-repeat, linear-gradient(#fff, #fff) 7px 22px / 12px 4px no-repeat, #4a80e8; border-radius: 3px; }
.wiki { background: #fff; border-radius: 6px; font-family: "Liberation Serif", serif; color: #000; font-size: 27px; }
.tab span {
  width: 126px; overflow: hidden; white-space: nowrap; line-height: 36px; letter-spacing: -.35px;
  -webkit-mask-image: linear-gradient(90deg, #000 70%, transparent);
  mask-image: linear-gradient(90deg, #000 70%, transparent);
}
.tab .x { width: 18px; height: 18px; margin-left: 17px; }
.tab.active { width: 256px; background: #fff; border-radius: 16px 16px 0 0; margin: 14px 0 0; padding-top: 0; }
.plus { width: 26px; height: 26px; margin: 35px 0 0 29px; }

/* toolbar */
.toolbar { height: 72px; background: #fff; display: flex; align-items: center; padding-left: 20px; }
.back, .fwd, .reload { width: 28px; height: 28px; margin-right: 36px; }
.reload { margin-right: 30px; }
.omnibox { width: 2902px; height: 56px; border-radius: 28px; background: #f1f3f4; display: flex; align-items: center; padding: 0 21px 0 28px; margin: 0 30px 0 0; }
.lock { width: 16px; height: 22px; margin-right: 25px; }
.url { font-size: 28px; color: #202124; flex: 1; letter-spacing: -.12px; }
.url em { color: #63676b; }
.trans { width: 28px; height: 28px; margin-right: 36px; }
.star { width: 30px; height: 28px; }
.ext { width: 28px; height: 28px; }
.tsep { width: 2px; height: 32px; background: #d0d2d5; margin: 0 23px 0 29px; }
.avatar { width: 44px; height: 44px; border-radius: 50%; background: #ad3e20; color: #fff; text-align: center; line-height: 44px; font-size: 25px; }
.dots { width: 6px; height: 26px; margin-left: 39px; fill: #5a5e63; }

/* bookmarks */
.bookmarks {
  height: 66px; background: #fff; border-bottom: 2px solid #d8dbdf;
  display: grid; grid-template-columns: 132px 143px 127px 135px 303px 307px 302px 313px 300px;
  padding-left: 20px; letter-spacing: -.11px;
}
.bookmarks div { display: flex; align-items: center; padding-bottom: 8px; }
.bookmarks span { white-space: nowrap; line-height: 30px; }
.bi { flex: none; }
.apps { width: 27px; height: 27px; margin-right: 20px; }
.gg { width: 25px; height: 25px; margin-right: 19px; }
.mp { width: 30px; height: 30px; margin-right: 15px; }
.tr { width: 31px; height: 31px; margin-right: 18px; }
.sov { width: 24px; height: 26px; margin-right: 19px; }
.mm { width: 32px; height: 28px; margin-right: 17px; }
.cd { width: 33px; height: 28px; margin-right: 16px; }
.yt { width: 29px; height: 22px; margin-right: 18px; }

/* web page */
.page { height: 1822px; background: #fff; position: relative; overflow: hidden; color: #333; font-family: "Open Sans", sans-serif; font-size: 32px; }
.site {
  position: relative; height: 192px; background: #213a5f; border-top: 10px solid #162f55;
  box-shadow: 0 2px 8px rgba(0, 0, 0, .15);
  display: flex; justify-content: space-between;
}
.quote {
  position: absolute; left: 530px; top: 70px; height: 104px; border-left: 10px solid #17305a; padding-left: 46px;
  font: italic 500 40px/104px "Noto Sans", sans-serif; letter-spacing: 1.150px; color: #17305a; white-space: nowrap;
}
.brand { display: flex; padding: 23px 0 0 70px; position: relative; }
.brand svg { width: 124px; height: 118px; margin-right: 10px; }
.brandtext { display: flex; flex-direction: column; align-items: flex-end; color: #fff; width: 333px; white-space: nowrap; }
.tatva { font: 62px/64px "DejaVu Sans", sans-serif; padding-top: 8px; letter-spacing: 5.500px; margin-right: -4px; }
.apl { font: 29.700px/34px Roboto, sans-serif; margin-top: 5px; }
.right { position: relative; display: flex; flex-direction: column; align-items: flex-end; padding-right: 70px; font-family: "Noto Sans", sans-serif; font-weight: 500; }
.contact { display: flex; gap: 47px; color: #ed8c35; font: 600 28px/40px "Open Sans", sans-serif; padding-top: 16px; white-space: nowrap; }
nav { display: flex; gap: 79.300px; color: #fff; line-height: 84px; margin-top: 14px; white-space: nowrap; letter-spacing: .13px; }
nav a { position: relative; height: 112px; }
nav a.on::after { content: ""; position: absolute; left: 0; right: 0; bottom: 0; height: 10px; background: #ed8c35; }
nav a.rfp { background: #ed8c35; width: 243px; height: 82px; text-align: center; line-height: 81px; margin-left: -2px; font-size: 30px; }
main { height: 860px; padding: 34px 0 0 530px; line-height: 56px; }
main p { margin-bottom: 44px; white-space: nowrap; }
main .lead { font-family: "Noto Sans CJK SC", sans-serif; font-size: 35.800px; line-height: 64px; margin-bottom: 46px; letter-spacing: -.01px; }
h3 { font-family: "Noto Sans CJK SC", sans-serif; font-weight: 600; font-size: 42px; line-height: 56px; color: #17305a; margin-top: 56px; white-space: nowrap; letter-spacing: -.49px; }
ul { list-style: none; display: grid; grid-template-columns: 990px 1000px; line-height: 70px; margin-top: 37px; padding-left: 80px; }
li { display: flex; align-items: center; }
li::before { content: ""; width: 12px; height: 12px; border-radius: 50%; background: #2a6ca6; margin: -5px 24px 0 0; }
.services {
  height: 770px; padding: 66px 0 0 530px;
  background:
    repeating-linear-gradient(52deg, rgba(0, 0, 0, 0) 0 120px, rgba(0, 0, 0, .012) 190px, rgba(255, 255, 255, .3) 260px, rgba(0, 0, 0, 0) 420px),
    linear-gradient(90deg, #fbfbfb, #f7f7f7 25%, #f7f7f7 80%, #f9f9f9);
}
h2 { font-family: "Noto Sans CJK SC", sans-serif; font-size: 62px; line-height: 80px; color: #17305a; height: 134px; letter-spacing: -.1px; }
.panel { width: 2280px; height: 570px; background: #fff; padding: 80px; display: grid; grid-template-columns: 1fr 1fr; gap: 60px; }
article { border: 2px solid #d6d6d6; border-top: 6px solid #2a6ca6; height: 490px; padding: 55px 0 0 60px; white-space: nowrap; }
h4 { font-size: 51.200px; line-height: 59px; height: 156px; }
article p { line-height: 50px; }
.fade { position: absolute; left: 0; right: 0; bottom: 114px; height: 110px; background: linear-gradient(transparent, rgba(0, 0, 0, .07)); }
.chat { position: absolute; left: 3190px; top: 1548px; width: 120px; height: 120px; }
.chat svg { display: block; width: 120px; height: 120px; border-radius: 50%; box-shadow: 0 6px 30px rgba(0, 0, 0, .3); }
.chat b { position: absolute; left: 88px; top: -2px; width: 42px; height: 42px; border-radius: 50%; background: #d6404f; color: #fff; font: 700 27px/42px "Open Sans", sans-serif; text-align: center; }

/* dock */
.dockbar { height: 114px; margin-top: -114px; position: relative; background: linear-gradient(#171b29, #2a3450); padding: 0 70px; }
.dock { position: relative; height: 114px; border-radius: 12px 12px 0 0; background: linear-gradient(#60646f, #676e84); border-top: 1px solid #8b8e96; padding-left: 8px; display: flex; }
.dock svg { width: 100px; height: 114px; flex: none; display: block; margin-top: -1px; filter: drop-shadow(0 2px 2px rgba(0, 0, 0, .3)); }
.dsep { width: 2px; height: 60px; margin: 31px 22px 0 18px; background: #3e4352; flex: none; }
.dsep.tall { height: 92px; margin: 16px 18px 0 20px; }
.running i { position: absolute; top: 110px; width: 8px; height: 8px; border-radius: 50%; background: #000; }
.t1 { font: 17px "Noto Sans CJK SC", sans-serif; fill: #fff; text-anchor: middle; }
.t2 { font: 300 38px Inter, sans-serif; fill: #222; text-anchor: middle; }
.t3 { font: 14px Inter, sans-serif; fill: #333; text-anchor: middle; }
.t4 { font: 700 11px Inter, sans-serif; fill: #fff; }
.t5 { font: 700 5.500px Inter, sans-serif; fill: #333; }
.badge { font: 20px Inter, sans-serif; fill: #fff; text-anchor: middle; }
.office { font: 700 31px "Open Sans", sans-serif; fill: #fff; text-anchor: middle; }
.pc { font: 700 29px "Open Sans", sans-serif; fill: #fff; }

/* screen sharing pill */
.share { position: absolute; left: 1378px; top: 34px; width: 584px; height: 44px; display: flex; border-radius: 4px 4px 8px 8px; box-shadow: 0 6px 40px rgba(0, 0, 0, .45); }
.sid { width: 396px; background: #70c238; border-radius: 4px 0 0 8px; display: flex; align-items: center; color: #222; padding: 0 16px 0 9px; font-family: "Liberation Sans", sans-serif; }
.sid span { margin: 0 auto 0 73px; }
.sid svg { width: 20px; height: 24px; }
.sid .slock { width: 18px; }
.stop { width: 188px; background: #cf3b32; border-radius: 0 4px 8px 0; color: #fff; display: flex; align-items: center; padding-left: 22px; font-size: 22px; white-space: nowrap; }
.stop i { width: 16px; height: 16px; background: #fff; margin-right: 12px; }
```
